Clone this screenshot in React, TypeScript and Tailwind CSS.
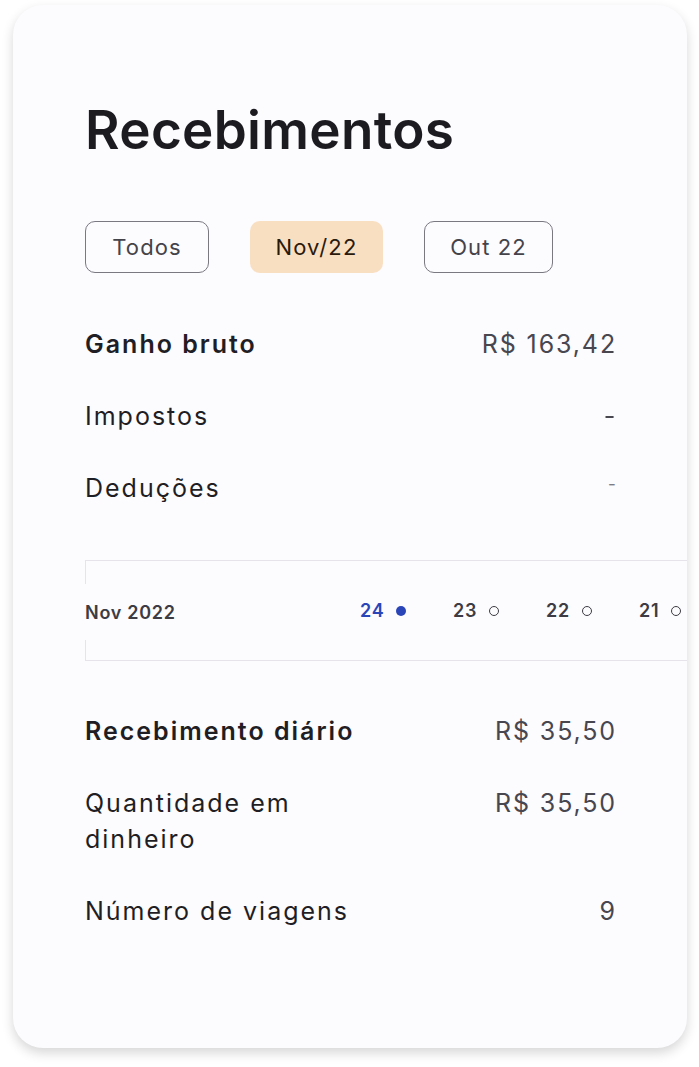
import React from "react";

const Row = ({ label, value, bold, small }: { label: React.ReactNode; value: string; bold?: boolean; small?: boolean }) => (
  <div className="flex justify-between items-start">
    <div className={`text-[25px] leading-[36px] tracking-[0.08em] text-[#1f1e24] ${bold ? "font-semibold" : "font-normal"}`}>{label}</div>
    <div className={`tracking-[0.075em] mr-[-2px] ${small ? "text-[17px] leading-[28px] text-[#7d7b83]" : "text-[25px] leading-[36px] text-[#48464e]"}`}>{value}</div>
  </div>
);

const DateItem = ({ n, active }: { n: string; active?: boolean }) => (
  <div className="w-[93px] shrink-0 flex items-center gap-[12px]">
    <span className={`text-[18px] font-semibold tracking-[0.04em] ${active ? "text-[#2a45b8]" : "text-[#3d3b43]"}`}>{n}</span>
    {active ? (
      <span className="w-[10px] h-[10px] rounded-full bg-[#2a45b8]" />
    ) : (
      <span className="w-[10px] h-[10px] rounded-full border-[1.5px] border-[#3d3b43]" />
    )}
  </div>
);

export default function App() {
  return (
    <div className="w-[699px] h-[1067px] bg-white pt-[5px] pl-[13px]" style={{ fontFamily: "Inter, 'Noto Sans', sans-serif" }}>
      <div className="w-[674px] h-[1043px] rounded-[30px] bg-[#fcfbfe] shadow-[0_5px_12px_rgba(0,0,0,0.16)] overflow-hidden px-[72px] pt-[94px]">
        <h1 className="text-[53px] leading-[62px] font-semibold text-[#1c1b20] tracking-[0.006em]">Recebimentos</h1>
        <div className="mt-[60px] flex gap-[41px]">
          <div className="w-[124px] h-[52px] rounded-[10px] border-[1.5px] border-[#7a7880] flex items-center justify-center text-[22px] tracking-[0.05em] text-[#45434a]">Todos</div>
          <div className="w-[133px] h-[52px] rounded-[10px] bg-[#f9dfc2] flex items-center justify-center text-[22px] tracking-[0.05em] text-[#2a1a0c]">Nov/22</div>
          <div className="w-[129px] h-[52px] rounded-[10px] border-[1.5px] border-[#7a7880] flex items-center justify-center text-[22px] tracking-[0.05em] text-[#45434a]">Out 22</div>
        </div>
        <div className="mt-[53px] flex flex-col gap-[36px]">
          <Row label="Ganho bruto" value="R$ 163,42" bold />
          <Row label="Impostos" value="-" />
          <Row label="Deduções" value="-" small />
        </div>
        <div className="mt-[54px] mr-[-80px] h-[101px] border-t border-b border-[#e6e4ea] flex">
          <div className="flex flex-col w-[150px] shrink-0">
            <div className="h-[23px] border-l border-[#e6e4ea]" />
            <div className="h-[56px] flex items-center text-[18px] font-semibold tracking-[0.04em] text-[#3d3b43]">Nov 2022</div>
            <div className="flex-1 border-l border-[#e6e4ea]" />
          </div>
          <div className="ml-[125px] flex items-center">
            <DateItem n="24" active />
            <DateItem n="23" />
            <DateItem n="22" />
            <DateItem n="21" />
          </div>
        </div>
        <div className="mt-[52px] flex flex-col gap-[36px]">
          <Row label="Recebimento diário" value="R$ 35,50" bold />
          <Row label={<>Quantidade em<br />dinheiro</>} value="R$ 35,50" />
          <Row label="Número de viagens" value="9" />
        </div>
      </div>
    </div>
  );
}
